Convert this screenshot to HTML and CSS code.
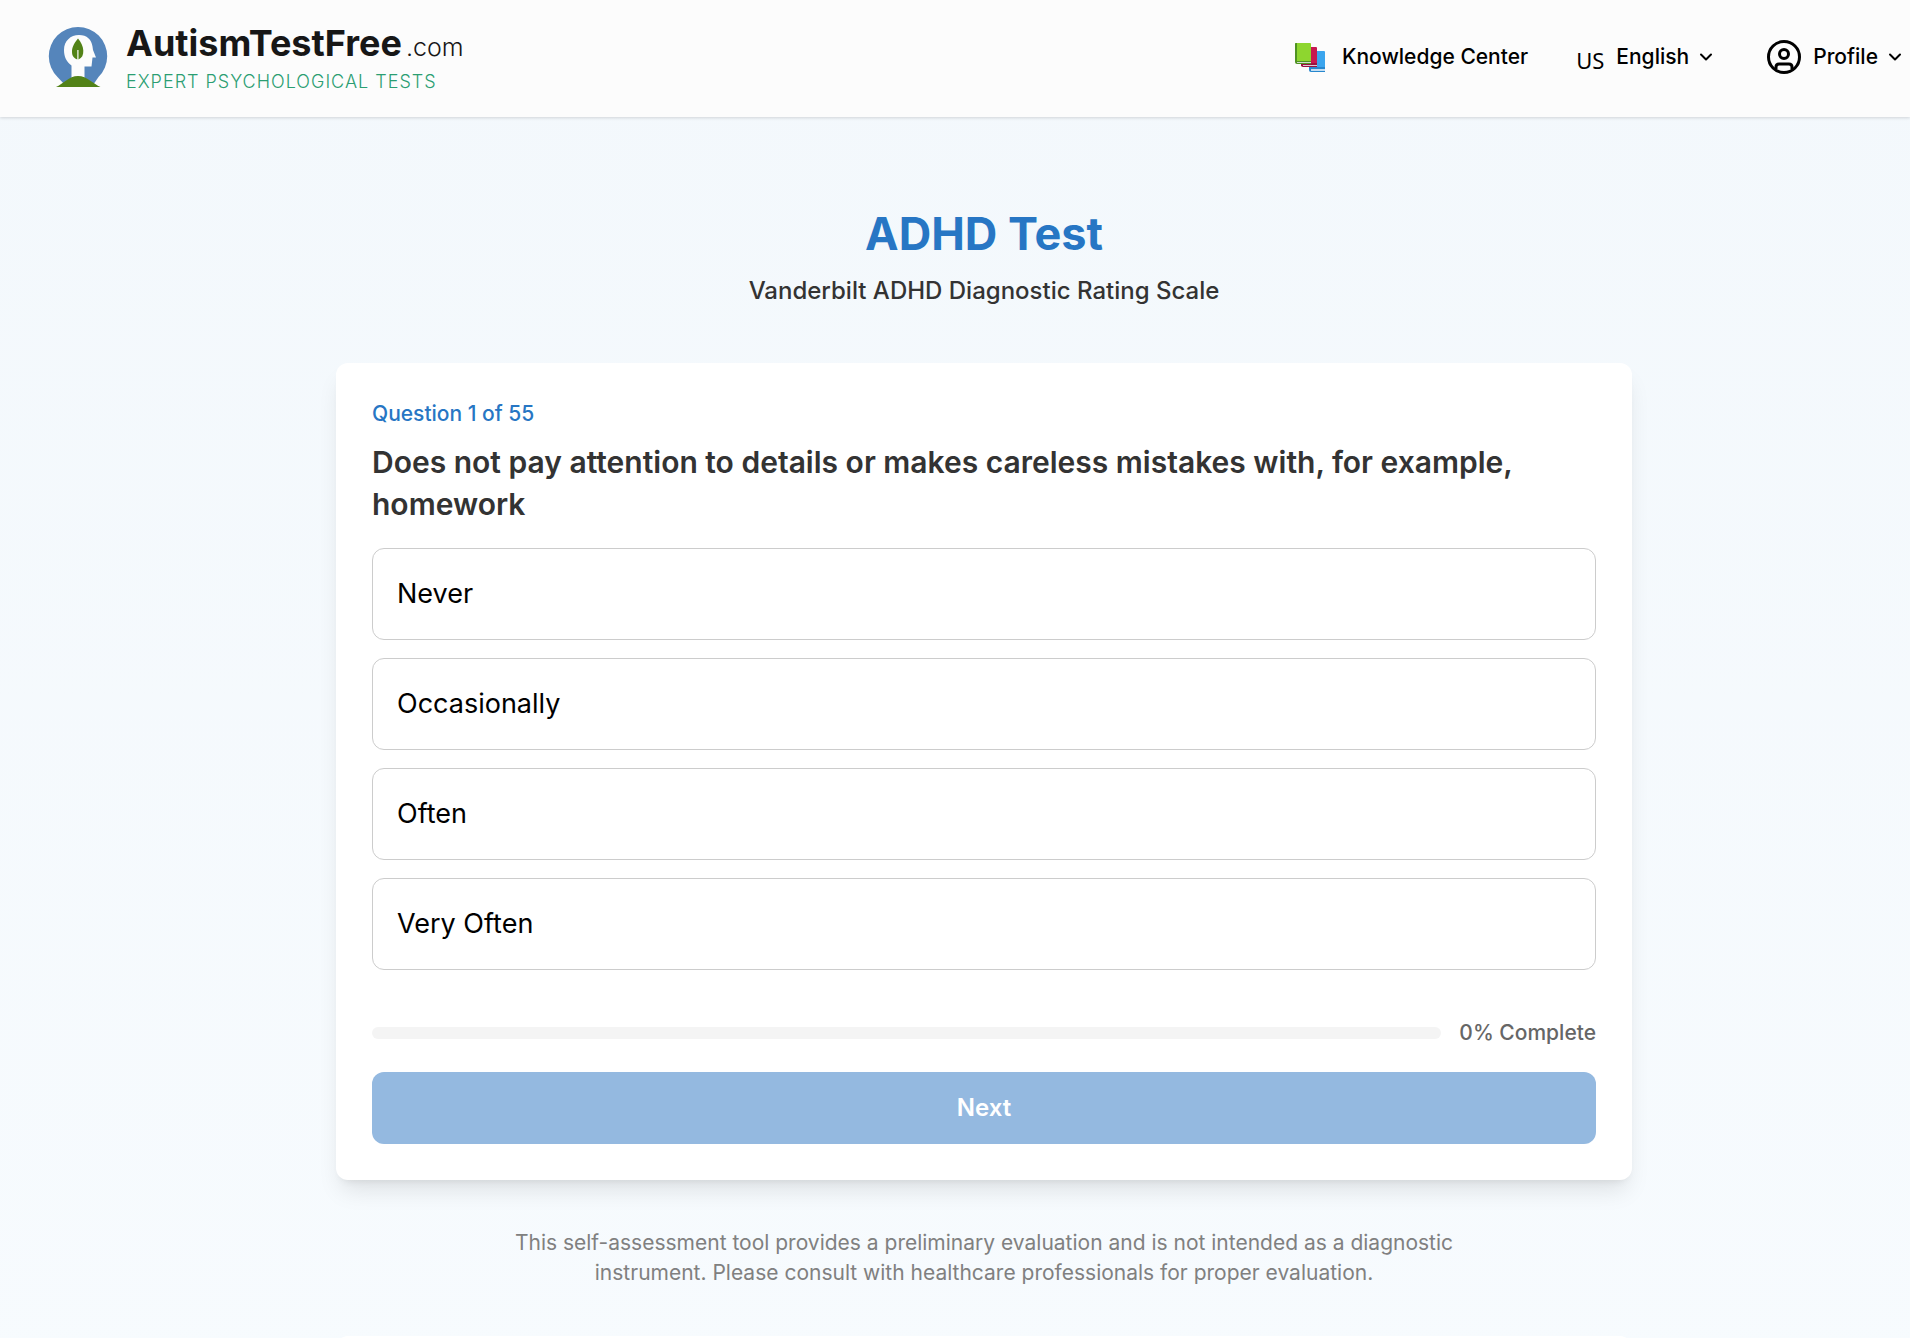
FILE: index.html
```html
<!DOCTYPE html>
<html lang="en">
<head>
<meta charset="utf-8">
<meta name="viewport" content="width=device-width, initial-scale=1">
<title>ADHD Test - AutismTestFree.com</title>
<link rel="stylesheet" href="styles.css">
</head>
<body>
<header class="site-header">
  <a class="brand" href="#">
    <svg class="brand-mark" viewBox="-1 0 60 60" aria-hidden="true">
      <path fill="#5585bb" d="M8.500 50A29.200 29.200 0 1 1 49.500 50L44 58H16Z"/>
      <path fill="#fcfcfc" d="M22.500 54V38.500C17.500 34.500 15 30 15 23C15 14 21.500 8 30 8C38 8 42.500 12.500 43.500 19.500L44 23L47 30.500H43.500L42.500 39.500H35.500V54Z"/>
      <path fill="#528217" d="M29 11.500C24.500 17 23 20.500 23 25C23 29.500 25.500 31.500 28.300 32.500V23H29.500V32.500C33 31 34.500 28 34.300 23.500C34.100 19 32 15 29 11.500Z"/>
      <path fill="#528217" d="M7 60C14 57 20 49 29 49S44.500 57 51.500 60Z"/>
    </svg>
    <span class="brand-text">
      <span class="brand-name"><strong>AutismTestFree</strong><span class="brand-tld">.com</span></span>
      <span class="brand-tagline">EXPERT PSYCHOLOGICAL TESTS</span>
    </span>
  </a>
  <nav class="site-nav">
    <a class="nav-item" href="#">
      <svg class="books" viewBox="0 0 32 30" aria-hidden="true">
        <path fill="#3ba5ee" d="M15 8H30Q31 8 31 9V27H15Z"/>
        <path fill="#2787ce" d="M15 24H31V29H17Q15 29 15 27Z"/>
        <path fill="#c4def2" d="M17 26H31V28H17Z"/>
        <path fill="#c71850" d="M7 4H22Q23 4 23 5V23H7Z"/>
        <path fill="#9b1240" d="M7 20H23V24H9Q7 24 7 22Z"/>
        <path fill="#d8cdd2" d="M9 22H23V23H9Z"/>
        <path fill="#8ed62f" d="M1 1Q1 0 2 0H16Q17 0 17 1V19H1Z"/>
        <path fill="#4f9223" d="M1 1Q1 0 2 0H3V18H17V21H3Q1 21 1 19Z"/>
        <path fill="#d0dfcf" d="M3 19H17V20H3Z"/>
      </svg>
      <span>Knowledge Center</span>
    </a>
    <button class="nav-item" type="button">
      <span class="flag">US</span>
      <span>English</span>
      <svg class="chevron" viewBox="0 0 18 18" aria-hidden="true"><path d="M4 6.500L9 11.500L14 6.500"/></svg>
    </button>
    <button class="nav-item profile" type="button">
      <svg class="avatar" viewBox="0 0 34 34" aria-hidden="true"><circle cx="17" cy="17" r="15.500"/><circle cx="17" cy="14" r="4.500"/><path d="M9 29V27Q9 24 12 24H22Q25 24 25 27V29"/></svg>
      <span>Profile</span>
      <svg class="chevron" viewBox="0 0 18 18" aria-hidden="true"><path d="M4 6.500L9 11.500L14 6.500"/></svg>
    </button>
  </nav>
</header>
<main class="page">
  <div class="intro">
    <h1>ADHD Test</h1>
    <p>Vanderbilt ADHD Diagnostic Rating Scale</p>
  </div>
  <section class="card">
    <p class="step">Question 1 of 55</p>
    <h2>Does not pay attention to details or makes careless mistakes with, for example, homework</h2>
    <div class="options">
      <button class="option" type="button">Never</button>
      <button class="option" type="button">Occasionally</button>
      <button class="option" type="button">Often</button>
      <button class="option" type="button">Very Often</button>
    </div>
    <div class="progress">
      <div class="track" role="progressbar" aria-valuenow="0" aria-valuemin="0" aria-valuemax="100" aria-labelledby="progress-text"></div>
      <span id="progress-text">0% Complete</span>
    </div>
    <button class="next" type="button" disabled>Next</button>
  </section>
  <p class="disclaimer">This self-assessment tool provides a preliminary evaluation and is not intended as a diagnostic instrument. Please consult with healthcare professionals for proper evaluation.</p>
  <section class="card"></section>
</main>
</body>
</html>
```

FILE: styles.css
```css
*, *::before, *::after { box-sizing: border-box; }

html { scrollbar-width: none; }

body {
  margin: 0;
  min-height: 100vh;
  font-family: Inter, "Liberation Sans", sans-serif;
  font-size: 21px;
  line-height: 30px;
  color: #333;
  background: linear-gradient(#f3f8fc, #f7fbfe);
}

h1, h2, p { margin: 0; }

button {
  font: inherit;
  color: inherit;
  background: none;
  border: 0;
  padding: 0;
}

.site-header {
  display: flex;
  align-items: center;
  justify-content: space-between;
  height: 117px;
  padding: 0 6px 4px 48px;
  background: #fcfcfc;
  box-shadow: 0 1px 3px rgba(0, 0, 0, 0.15);
}

.brand {
  display: flex;
  align-items: center;
  gap: 18px;
  color: #171717;
  text-decoration: none;
}

.brand-mark { width: 60px; height: 60px; }

.brand-text { display: flex; flex-direction: column; padding-top: 3px; }

.brand-name {
  display: flex;
  align-items: baseline;
  gap: 4px;
  font-size: 36px;
  line-height: 42px;
}

.brand-tld { font-size: 25px; font-weight: 300; }

.brand-tagline {
  font-size: 18px;
  font-weight: 300;
  line-height: 27px;
  letter-spacing: 1px;
  color: #2b9e72;
}

.site-nav { display: flex; align-items: center; gap: 48px; }

.nav-item {
  display: flex;
  align-items: center;
  gap: 12px;
  font-weight: 500;
  color: #000;
  text-decoration: none;
}

.profile { margin-left: 4px; }

.books { width: 32px; height: 30px; margin: 2px 4px 0 0; }

.flag { padding-top: 6px; font-family: "Noto Sans", sans-serif; font-size: 22px; font-weight: 400; }

.chevron {
  width: 18px;
  height: 18px;
  margin-left: -4px;
  fill: none;
  stroke: currentColor;
  stroke-width: 2;
  stroke-linecap: round;
  stroke-linejoin: round;
}

.avatar {
  width: 34px;
  height: 34px;
  fill: none;
  stroke: currentColor;
  stroke-width: 3;
}

.page {
  display: flex;
  flex-direction: column;
  align-items: center;
  padding: 90px 0 0 58px;
}

.intro { text-align: center; margin-bottom: 54px; }

h1 {
  font-size: 45px;
  line-height: 54px;
  font-weight: 700;
  color: #2776c4;
}

.intro p {
  margin-top: 12px;
  font-size: 24px;
  line-height: 36px;
  font-weight: 500;
}

.card {
  width: 100%;
  max-width: 1296px;
  padding: 36px;
  border-radius: 12px;
  background: #fff;
  box-shadow: 0 15px 23px -5px rgba(0, 0, 0, 0.1), 0 6px 9px -6px rgba(0, 0, 0, 0.1);
}

.step { font-weight: 500; color: #2776c4; }

h2 {
  margin: 12px 0 23px;
  font-size: 30px;
  line-height: 42px;
  font-weight: 600;
}

.options { display: flex; flex-direction: column; gap: 18px; }

.option {
  height: 92px;
  padding: 0 24px;
  border: 1px solid #ccc;
  border-radius: 12px;
  font-size: 27px;
  color: #000;
  text-align: left;
}

.progress {
  display: flex;
  align-items: center;
  gap: 18px;
  margin: 48px 0 24px;
  font-weight: 500;
  color: #666;
}

.track { flex: 1; height: 12px; border-radius: 6px; background: #f4f4f4; }

.next {
  width: 100%;
  height: 72px;
  border-radius: 12px;
  background: #94b9e0;
  font-size: 24px;
  font-weight: 600;
  color: #fff;
}

.disclaimer {
  max-width: 1008px;
  margin: 48px 0;
  color: #808080;
  text-align: center;
}
```
